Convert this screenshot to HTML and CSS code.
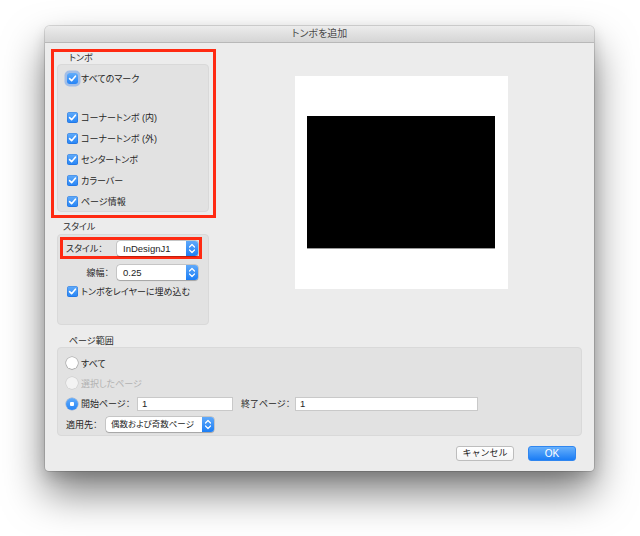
FILE: index.html
```
<!DOCTYPE html>
<html lang="ja">
<head>
  <meta charset="utf-8">
  <title>トンボを追加</title>
  <link rel="stylesheet" href="styles.css">
</head>
<body>
  <div class="window">
    <div class="titlebar">トンボを追加</div>
    <div class="top">
      <div class="left-col">
        <!-- marks -->
        <div class="mark-frame">
          <div class="sect-label">トンボ</div>
          <div class="group group-marks">
            <div class="check-row"><span class="check focus"><svg viewBox="0 0 11 11"><path d="M2.6 5.6 L4.6 7.7 L8.4 3.2"/></svg></span>すべてのマーク</div>
            <div class="check-row spaced"><span class="check"><svg viewBox="0 0 11 11"><path d="M2.6 5.6 L4.6 7.7 L8.4 3.2"/></svg></span>コーナートンボ (内)</div>
            <div class="check-row"><span class="check"><svg viewBox="0 0 11 11"><path d="M2.6 5.6 L4.6 7.7 L8.4 3.2"/></svg></span>コーナートンボ (外)</div>
            <div class="check-row"><span class="check"><svg viewBox="0 0 11 11"><path d="M2.6 5.6 L4.6 7.7 L8.4 3.2"/></svg></span>センタートンボ</div>
            <div class="check-row"><span class="check"><svg viewBox="0 0 11 11"><path d="M2.6 5.6 L4.6 7.7 L8.4 3.2"/></svg></span>カラーバー</div>
            <div class="check-row"><span class="check"><svg viewBox="0 0 11 11"><path d="M2.6 5.6 L4.6 7.7 L8.4 3.2"/></svg></span>ページ情報</div>
          </div>
        </div>
        <!-- style -->
        <div class="sect-label">スタイル</div>
        <div class="group group-style">
          <div class="style-frame">
            <div class="field-row">
              <span class="field-label lbl-style">スタイル：</span>
              <span class="select sel-style"><span class="select-val">InDesignJ1</span><span class="stepper"><svg viewBox="0 0 12 15"><path d="M3.5 6 L6 3.5 L8.5 6 M3.5 9 L6 11.5 L8.5 9"/></svg></span></span>
            </div>
          </div>
          <div class="field-row row-width">
            <span class="field-label lbl-width">線幅：</span>
            <span class="select sel-style"><span class="select-val">0.25</span><span class="stepper"><svg viewBox="0 0 12 15"><path d="M3.5 6 L6 3.5 L8.5 6 M3.5 9 L6 11.5 L8.5 9"/></svg></span></span>
          </div>
          <div class="check-row row-layer"><span class="check"><svg viewBox="0 0 11 11"><path d="M2.6 5.6 L4.6 7.7 L8.4 3.2"/></svg></span>トンボをレイヤーに埋め込む</div>
        </div>
      </div>
      <div class="preview">
        <div class="preview-page"></div>
      </div>
    </div>

    <div class="sect-label range-label">ページ範囲</div>
    <div class="group group-range">
      <div class="radio-row"><span class="radio"></span>すべて</div>
      <div class="radio-row disabled"><span class="radio"></span>選択したページ</div>
      <div class="radio-row tall"><span class="radio on"></span><span class="lbl-start">開始ページ：</span><span class="input in-start">1</span><span class="lbl-end">終了ページ：</span><span class="input in-end">1</span></div>
      <div class="radio-row tall"><span class="lbl-apply">適用先：</span><span class="select sel-apply"><span class="select-val">偶数および奇数ページ</span><span class="stepper"><svg viewBox="0 0 12 15"><path d="M3.5 6 L6 3.5 L8.5 6 M3.5 9 L6 11.5 L8.5 9"/></svg></span></span></div>
    </div>

    <div class="buttons">
      <button class="btn btn-cancel">キャンセル</button>
      <button class="btn btn-ok">OK</button>
    </div>
  </div>
</body>
</html>
```

FILE: styles.css
```
html {background: #fff;}
body {margin: 0; padding-top: 26px; min-height: 536px; box-sizing: border-box; font-family: "Liberation Sans", "Noto Sans CJK JP", sans-serif; font-size: 9px; color: #262626; font-feature-settings: "palt";}

.window {width: 549px; height: 445px; margin-left: 45px; box-sizing: border-box; background: #ececec; border-radius: 5px 5px 4px 4px;
  box-shadow: 0 0 0 1px rgba(0,0,0,.13), 0 22px 40px rgba(0,0,0,.5), 0 6px 14px rgba(0,0,0,.14);}
.titlebar {height: 17px; box-sizing: border-box; border-bottom: 1px solid #b8b8b8; background: linear-gradient(#ececec, #d5d5d5); border-radius: 5px 5px 0 0;
  text-align: center; line-height: 16px; font-size: 10px; color: #4a4a4a;}

.top {display: flex; padding: 6px 0 0 6px;}
.left-col {width: 165px;}
.mark-frame {border: 3px solid #ff2a12; padding: 0 4px 3px 3px;}
.sect-label {height: 12px; line-height: 12px; padding-left: 12px; color: #2b2b2b;}
.left-col > .sect-label {margin-top: 3px;}
.group {box-sizing: border-box; background: #e2e2e2; border: 1px solid #d9d9d9; border-radius: 4px;}
.group-marks {width: 152px; height: 148px; padding: 3px 0 0 9px;}
.group-style {width: 152px; height: 91px; margin: 1px 0 0 6px;}

.check-row {display: flex; align-items: center; height: 21px; white-space: nowrap;}
.check-row.spaced {margin-top: 18px;}
.check {width: 11px; height: 11px; margin-right: 3px; border-radius: 2.5px; background: linear-gradient(#62acfa, #2584f6); box-shadow: inset 0 0 0 .5px rgba(0,60,160,.35); flex: none;}
.check svg {display: block; width: 11px; height: 11px; fill: none; stroke: #fff; stroke-width: 1.6; stroke-linecap: round; stroke-linejoin: round;}
.check.focus {box-shadow: 0 0 0 2.5px rgba(110,160,235,.55);}

.style-frame {width: 142px; height: 22px; box-sizing: border-box; margin: 2px 0 0 2px; border: 3px solid #ff2a12;}
.field-row {display: flex; align-items: center; height: 16px;}
.field-label {text-align: right; padding-right: 8px; box-sizing: border-box; white-space: nowrap;}
.lbl-style {width: 54px; text-align: left; padding-left: 3px;}
.lbl-width {width: 59px;}
.row-width {margin-top: 5px;}
.row-layer {margin-top: 3px; padding-left: 9px; height: 16px;}

.select {display: flex; height: 15px; box-sizing: border-box; background: #fff; border-radius: 3px; box-shadow: 0 0 0 .5px rgba(0,0,0,.22), 0 .5px 1px rgba(0,0,0,.18); overflow: hidden;}
.select-val {flex: 1; padding-left: 6px; line-height: 15px; font-size: 9.5px; color: #1e1e1e; white-space: nowrap;}
.stepper {width: 12px; background: linear-gradient(#5fa9fa, #1c7ef5);}
.stepper svg {display: block; width: 12px; height: 15px; fill: none; stroke: #fff; stroke-width: 1.2; stroke-linecap: round; stroke-linejoin: round;}
.sel-style {width: 81px;}
.sel-apply {width: 108px;}
.sel-apply .select-val {font-size: 8.5px; padding-left: 5px;}

.preview {width: 213px; height: 213px; margin: 27px 0 0 79px; background: #fff; padding: 40px 0 0 12px; box-sizing: border-box;}
.preview-page {width: 188px; height: 133px; background: #000; border-bottom: 1px solid #9a9a9a; box-sizing: border-box;}

.range-label {margin: 11px 0 0 12px; height: 11px; line-height: 11px;}
.group-range {width: 525px; height: 89px; margin: 0 0 0 12px; padding: 5px 0 0 8px;}
.radio-row {display: flex; align-items: center; height: 20px; white-space: nowrap;}
.radio-row.tall {height: 21px;}
.radio {width: 12px; height: 12px; margin-right: 3px; box-sizing: border-box; border-radius: 50%; background: #fff; box-shadow: 0 0 0 .5px rgba(0,0,0,.3), 0 .5px 1px rgba(0,0,0,.2); flex: none;}
.radio.on {background: radial-gradient(circle, #fff 0 2px, transparent 2.5px), linear-gradient(#62acfa, #2584f6); box-shadow: 0 0 0 .5px rgba(0,60,160,.35);}
.disabled {color: #b2b2b2;}
.disabled .radio {background: #f3f3f3; box-shadow: 0 0 0 .5px rgba(0,0,0,.12);}
.lbl-start {width: 56px;}
.lbl-end {width: 54px; margin-left: 8px;}
.lbl-apply {width: 40px;}
.input {height: 14px; box-sizing: border-box; background: #fff; border: 1px solid #c9c9c9; padding-left: 4px; line-height: 12px; font-size: 9.5px;}
.in-start {width: 96px;}
.in-end {width: 183px;}

.buttons {display: flex; justify-content: flex-end; gap: 14px; padding: 10px 18px 0 0;}
.btn {height: 15px; padding: 0; border-radius: 3px; font-family: inherit; font-size: 9px; line-height: 13px;}
.btn-cancel {width: 58px; background: linear-gradient(#fff, #f5f5f5); border: 1px solid #bdbdbd; color: #222;}
.btn-ok {width: 48px; background: linear-gradient(#67b0fb, #1a7cf5); border: 1px solid #2f86f0; color: #fff; font-size: 10px;}
```
